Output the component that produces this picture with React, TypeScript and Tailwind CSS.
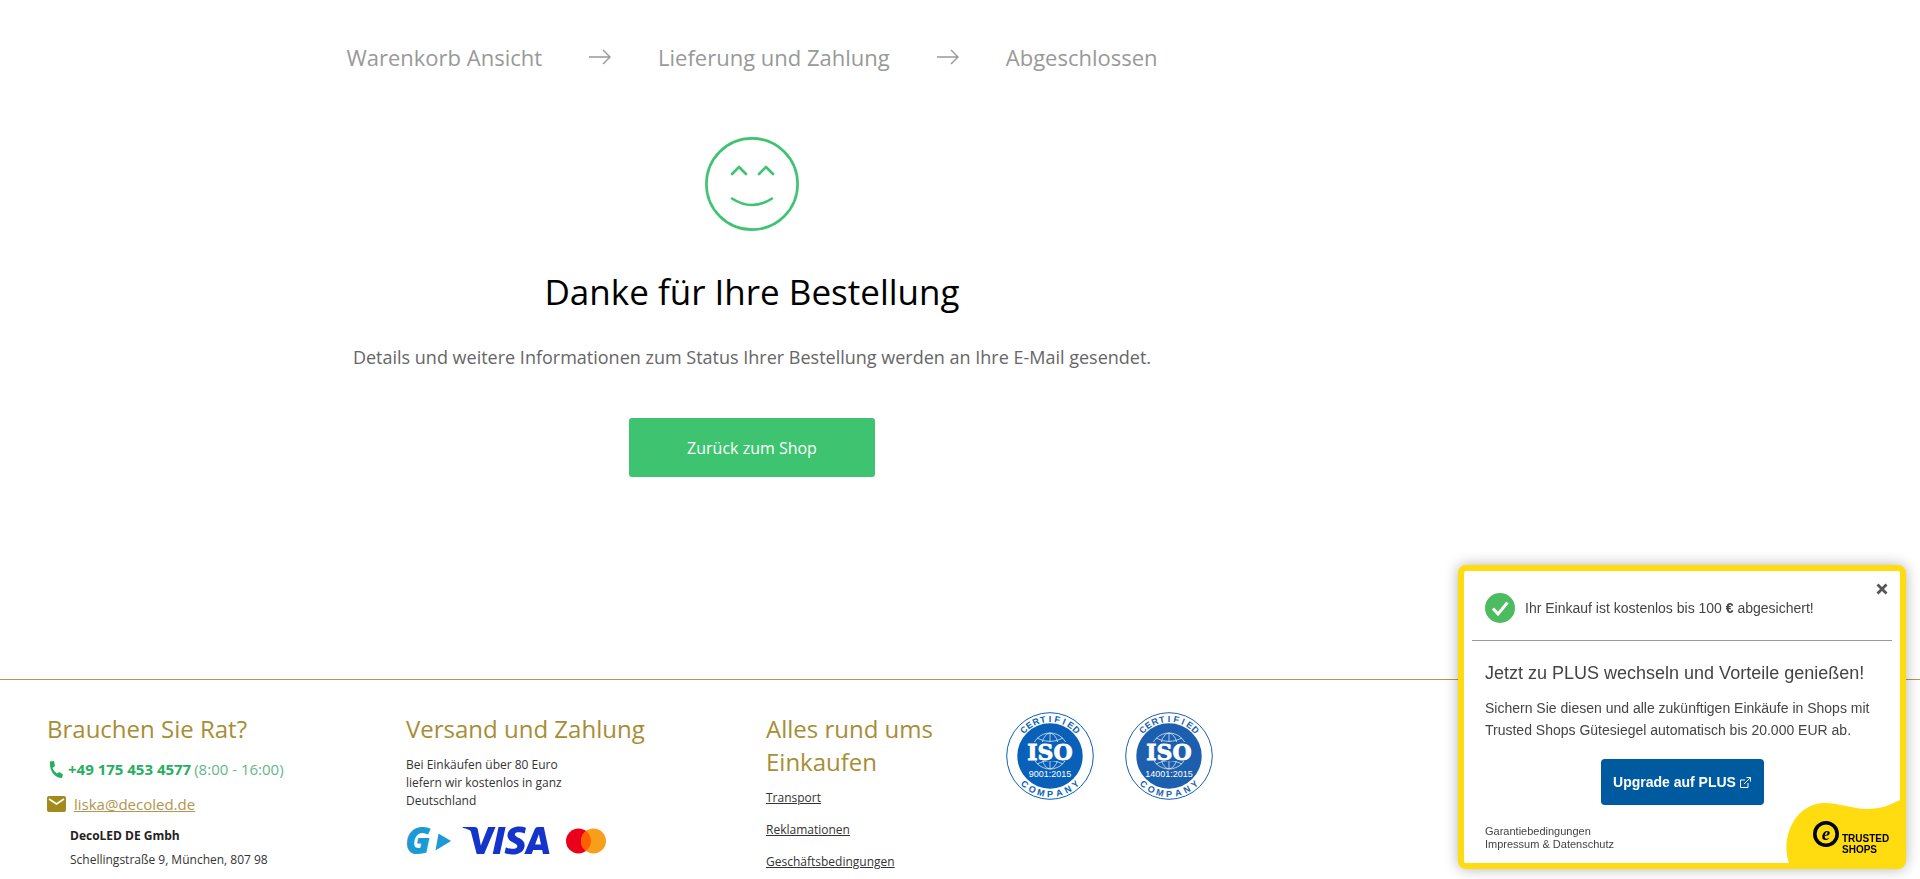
import { Fragment } from 'react';
import { SiVisa } from 'react-icons/si';

const steps = ['Warenkorb Ansicht', 'Lieferung und Zahlung', 'Abgeschlossen'];

function ArrowIcon() {
  return (
    <svg width="24" height="16" viewBox="0 0 24 16" fill="none" stroke="#999" strokeWidth="1.4" aria-hidden="true">
      <path d="M1 8h21M15 1l7 7-7 7" />
    </svg>
  );
}

function SmileIcon() {
  return (
    <svg width="94" height="94" viewBox="0 0 94 94" fill="none" stroke="#3ec470" strokeWidth="2.6" strokeLinecap="round" strokeLinejoin="round" aria-hidden="true">
      <circle cx="47" cy="47" r="45.6" />
      <path d="M27 37l7-7 7 7M54 37l7-7 7 7" />
      <path d="M27 61.500q20 13 40 0" />
    </svg>
  );
}

interface ArcLettersProps {
  word: string;
  radius: number;
  spread: number;
  bottom?: boolean;
}

// Letters set around the rim of the badge
function ArcLetters({ word, radius, spread, bottom = false }: ArcLettersProps) {
  const step = (spread * 2) / (word.length - 1);
  return (
    <>
      {word.split('').map((letter, i) => {
        const angle = (-spread + i * step) * (bottom ? -1 : 1);
        return (
          <text key={i} x="44" y={bottom ? 44 + radius : 44 - radius} transform={`rotate(${angle} 44 44)`}>
            {letter}
          </text>
        );
      })}
    </>
  );
}

function IsoBadge({ norm, color }: { norm: string; color: string }) {
  return (
    <svg width="88" height="88" viewBox="0 0 88 88" textAnchor="middle" role="img" aria-label={`ISO ${norm}`}>
      <circle cx="44" cy="44" r="43.3" fill="#fff" stroke={color} strokeWidth="1" />
      <circle cx="44" cy="44" r="32.700" fill={color} />
      <g fill="none" stroke="#fff" strokeWidth="0.8" opacity="0.85">
        <circle cx="44" cy="39" r="18" />
        <ellipse cx="44" cy="39" rx="9" ry="18" />
        <path d="M44 21v36M31 26q13 7 26 0M31 52q13-7 26 0" />
      </g>
      <path d="M22 30h44v19H22z" fill={color} />
      <g fill={color} fontFamily="'Liberation Sans', sans-serif" fontWeight="700" fontSize="9">
        <ArcLetters word="CERTIFIED" radius={34} spread={45} />
        <ArcLetters word="COMPANY" radius={41} spread={42} bottom />
      </g>
      <text x="44" y="48" fill="#fff" stroke="#fff" strokeWidth="0.8" fontFamily="'DejaVu Serif', serif" fontWeight="700" fontSize="22">ISO</text>
      <text x="44" y="65" fill="#fff" fontFamily="'Liberation Sans', sans-serif" fontSize="9">{norm}</text>
    </svg>
  );
}

function PaymentLogos() {
  return (
    <div className="mt-4 flex items-center">
      <svg width="46" height="28" viewBox="0 0 46 28" className="overflow-visible" fill="#1c9ad6" role="img" aria-label="GoPay">
        <text x="-1" y="27" fontFamily="'Open Sans', sans-serif" fontStyle="italic" fontWeight="800" fontSize="37">G</text>
        <path d="M32.500 6.500L45 14l-15.500 9.500z" />
      </svg>
      <SiVisa viewBox="0 8 24 8" className="ml-2.5 h-[29px] w-[88px] text-[#1434cb]" title="Visa" />
      <svg width="40" height="26" viewBox="0 0 40 26" className="ml-4" role="img" aria-label="Mastercard">
        <circle cx="12.500" cy="13" r="12.500" fill="#eb001b" />
        <circle cx="27.500" cy="13" r="12.500" fill="#f79e1b" />
        <path d="M20 3a12.500 12.500 0 0 1 0 20 12.500 12.500 0 0 1 0-20z" fill="#ff5f00" />
      </svg>
    </div>
  );
}

function TrustedShopsCard() {
  return (
    <aside className="fixed right-3.5 bottom-2.5 w-[448px] rounded-lg border-6 border-[#ffdc0f] bg-white pb-3 font-['Liberation_Sans',Arial,sans-serif] text-[#444] shadow-[0_0_14px_rgba(0,0,0,0.3)]">
      <button type="button" aria-label="Schließen" className="absolute top-3 right-3 text-[#555]">
        <svg width="12" height="12" viewBox="0 0 12 12" stroke="currentColor" strokeWidth="2.800">
          <path d="M1.500 1.500l9 9M10.500 1.500l-9 9" />
        </svg>
      </button>
      <div className="mx-2 flex h-[70px] items-center gap-2.5 border-b border-[#999] px-[13px] pt-1">
        <svg width="30" height="30" viewBox="0 0 30 30" aria-hidden="true">
          <circle cx="15" cy="15" r="15" fill="#4dbb60" />
          <path d="M8 15.500l5 5.500L22.500 9.500" fill="none" stroke="#fff" strokeWidth="3" />
        </svg>
        <p className="text-sm">
          Ihr Einkauf ist kostenlos bis 100 <b>€</b> abgesichert!
        </p>
      </div>
      <div className="px-[21px]">
        <h2 className="mt-5 text-lg leading-6">Jetzt zu PLUS wechseln und Vorteile genießen!</h2>
        <p className="mt-3 text-sm leading-[22px] whitespace-nowrap">
          Sichern Sie diesen und alle zukünftigen Einkäufe in Shops mit
          <br />
          Trusted Shops Gütesiegel automatisch bis 20.000 EUR ab.
        </p>
        <button type="button" className="mx-auto mt-[18px] flex h-[46px] w-[163px] items-center justify-center gap-1 rounded bg-[#005aa0] text-sm font-bold text-white">
          Upgrade auf PLUS
          <svg width="11" height="11" viewBox="0 0 11 11" fill="none" stroke="currentColor" aria-hidden="true">
            <path d="M5 3H.5v7.500H8V6M4 7l6-6M6.500.5h4v4" />
          </svg>
        </button>
        <div className="mt-5 flex flex-col items-start text-[11px] leading-[13px]">
          <a href="#garantie">Garantiebedingungen</a>
          <a href="#impressum">Impressum &amp; Datenschutz</a>
        </div>
      </div>
      <svg className="absolute right-0 bottom-0" width="115" height="63" viewBox="0 0 115 63" role="img" aria-label="Trusted Shops">
        <path d="M4 63C-5 38 10 3 40 3c15 0 27 6 42 6 14 0 23-4 33-9v63z" fill="#ffdc0f" />
        <circle cx="41" cy="34" r="11.200" fill="none" stroke="#000" strokeWidth="3.600" />
        <text x="41" y="40" textAnchor="middle" fontFamily="'Liberation Serif', serif" fontStyle="italic" fontWeight="700" fontSize="19">e</text>
        <g fontFamily="'Liberation Sans', sans-serif" fontWeight="700" fontSize="10">
          <text x="57" y="42">TRUSTED</text>
          <text x="57" y="53">SHOPS</text>
        </g>
      </svg>
    </aside>
  );
}

export default function App() {
  return (
    <div className="bg-white font-['Open_Sans',sans-serif] text-[#333]">
      <main className="flex max-w-[1504px] flex-col items-center pt-[39px]">
        <ol className="flex items-center text-[22px] leading-9 text-[#999]">
          {steps.map((step, i) => (
            <Fragment key={step}>
              {i > 0 && (
                <li className="mx-[46px]" aria-hidden="true">
                  <ArrowIcon />
                </li>
              )}
              <li>{step}</li>
            </Fragment>
          ))}
        </ol>
        <div className="mt-[62px]">
          <SmileIcon />
        </div>
        <h1 className="mt-9 text-[35px] leading-[50px] text-black">Danke für Ihre Bestellung</h1>
        <p className="mt-[26px] text-lg leading-7 text-[#666]">
          Details und weitere Informationen zum Status Ihrer Bestellung werden an Ihre E-Mail gesendet.
        </p>
        <button type="button" className="mt-[47px] h-[59px] w-[246px] rounded-[3px] bg-[#3ec470] text-base text-white">
          Zurück zum Shop
        </button>
      </main>

      <footer className="mt-[202px] flex border-t border-[#b09a45] pt-8 pl-[47px]">
        <section className="w-[359px]">
          <h3 className="text-2xl leading-[33px] text-[#a88d35]">Brauchen Sie Rat?</h3>
          <p className="mt-3 flex items-center text-[15px] leading-6 text-[#5fb888]">
            <svg width="18" height="20" viewBox="0 0 18 20" className="mr-[3px]" fill="#27ae60" aria-hidden="true">
              <path d="M3 2.500L7 2l1 5-2.500 2q1.500 4 4.500 5.500l2.500-1.500L16 15.500l-1 3.500C8 19.500 2 12 3 2.500z" />
            </svg>
            <a href="tel:+491754534577" className="mr-[3px] font-bold text-[#27ae60]">+49 175 453 4577</a>
            (8:00 - 16:00)
          </p>
          <p className="mt-[11px] flex items-center gap-2 text-[15px] leading-6">
            <svg width="19" height="16" viewBox="0 0 19 16" aria-hidden="true">
              <rect width="19" height="16" rx="2" fill="#a28a1c" />
              <path d="M2 3l7.500 5L17 3" fill="none" stroke="#fff" strokeWidth="1.600" />
            </svg>
            <a href="mailto:liska@decoled.de" className="text-[#b09550] underline">liska@decoled.de</a>
          </p>
          <address className="mt-2 pl-[23px] text-xs leading-6 not-italic">
            <b className="text-[#222]">DecoLED DE Gmbh</b>
            <br />
            Schellingstraße 9, München, 807 98
          </address>
        </section>

        <section className="w-[360px]">
          <h3 className="text-2xl leading-[33px] text-[#a88d35]">Versand und Zahlung</h3>
          <p className="mt-[11px] w-[170px] text-xs leading-[18px]">
            Bei Einkäufen über 80 Euro liefern wir kostenlos in ganz Deutschland
          </p>
          <PaymentLogos />
        </section>

        <section className="w-[240px] pr-5">
          <h3 className="text-2xl leading-[33px] text-[#a88d35]">Alles rund ums Einkaufen</h3>
          <ul className="mt-[11px] space-y-3.5 text-xs leading-[18px]">
            <li><a href="#transport" className="underline">Transport</a></li>
            <li><a href="#reklamationen" className="underline">Reklamationen</a></li>
            <li><a href="#agb" className="underline">Geschäftsbedingungen</a></li>
          </ul>
        </section>

        <div className="flex gap-[31px]">
          <IsoBadge norm="9001:2015" color="#0860b8" />
          <IsoBadge norm="14001:2015" color="#1b5fae" />
        </div>
      </footer>

      <TrustedShopsCard />
    </div>
  );
}
